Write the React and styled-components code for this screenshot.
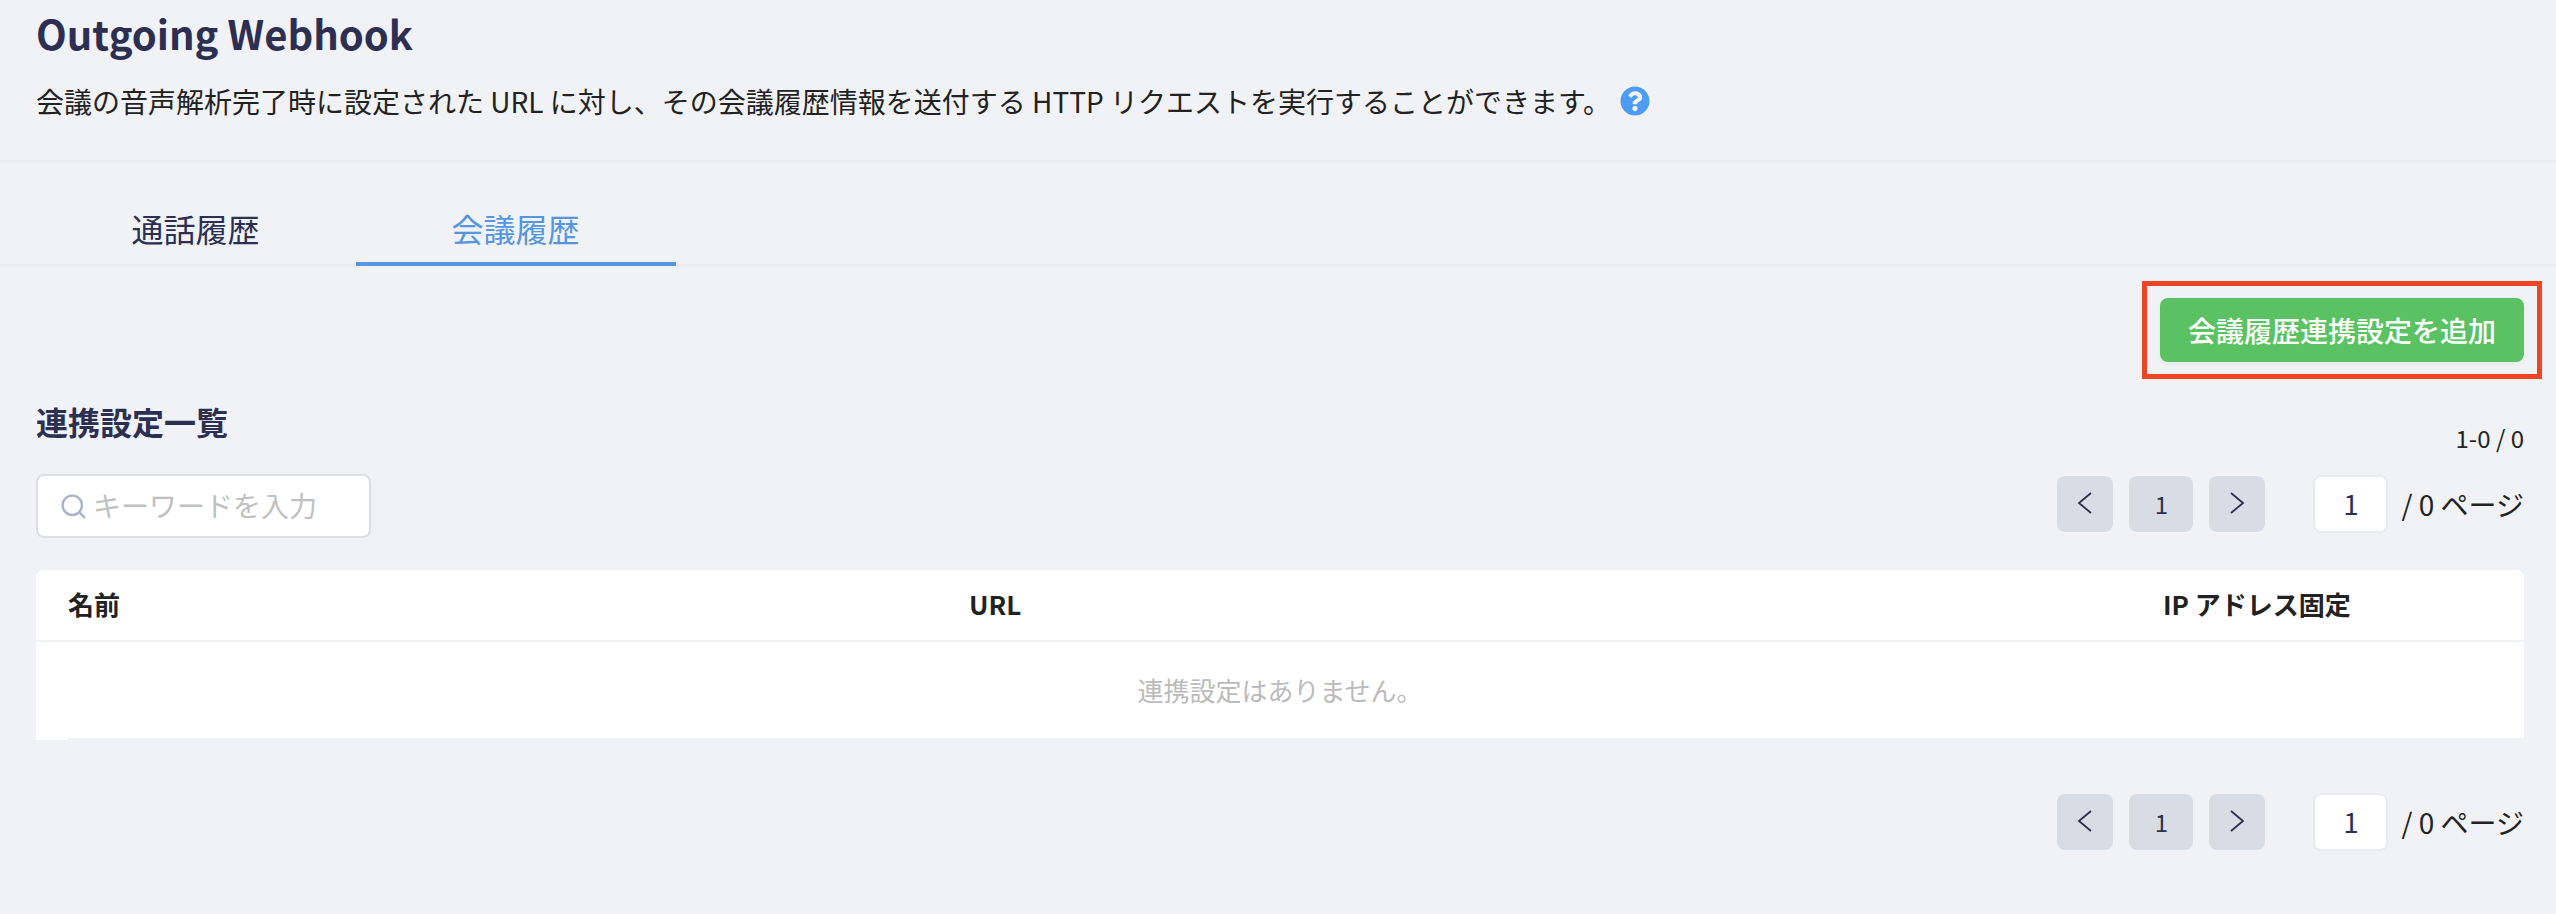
import React from 'react'
import styled, { createGlobalStyle } from 'styled-components'
import { FaQuestionCircle } from 'react-icons/fa'
import { Search } from 'lucide-react'

const GlobalStyle = createGlobalStyle`
  html, body {
    margin: 0;
    background: #f0f2f6;
  }
  body {
    font-family: "Noto Sans CJK JP", "Noto Sans", sans-serif;
    color: #222;
    overflow: hidden;
  }
  * {
    box-sizing: border-box;
  }
`

const Page = styled.div`
  width: 2556px;
  height: 914px;
  background: #f0f2f6;
`

const Header = styled.header`
  height: 162px;
  padding: 12px 36px 0;
  border-bottom: 2px solid #e8eaee;
`

const Title = styled.h1`
  margin: 0;
  font-size: 40px;
  line-height: 42px;
  font-weight: 700;
  color: #2d2f52;
`

const Description = styled.p`
  display: flex;
  align-items: center;
  margin: 27px 0 0;
  font-size: 28px;
  line-height: 40px;
`

const HelpIcon = styled(FaQuestionCircle)`
  width: 30px;
  height: 30px;
  margin-left: 9px;
  color: #4c9cf4;
`

const Tabs = styled.nav`
  display: flex;
  height: 104px;
  padding-left: 36px;
  border-bottom: 2px solid #e8eaee;
`

const Tab = styled.div`
  width: 320px;
  height: 104px;
  padding: 46px 1px 0 0;
  text-align: center;
  font-size: 32px;
  line-height: 40px;
  color: ${(props) => (props.active ? '#5597df' : '#2d2f52')};
  border-bottom: 4px solid ${(props) => (props.active ? '#5597df' : 'transparent')};
`

const Content = styled.main`
  padding: 32px 32px 0 36px;
`

const Actions = styled.div`
  display: flex;
  justify-content: flex-end;
`

const AddButton = styled.button`
  position: relative;
  width: 364px;
  height: 64px;
  padding: 0;
  border: none;
  border-radius: 8px;
  background: #5bc264;
  color: #fff;
  font-family: inherit;
  font-size: 28px;
  font-weight: 500;
  box-shadow: 0 2px 4px rgba(0, 0, 0, 0.05);

  &::after {
    content: '';
    position: absolute;
    inset: -17px -18px;
    border: 5px solid #ee4422;
  }
`

const SectionRow = styled.div`
  display: flex;
  justify-content: space-between;
  height: 112px;
`

const SectionTitle = styled.h2`
  margin: 0;
  padding-top: 41px;
  font-size: 32px;
  line-height: 36px;
  font-weight: 700;
  color: #2d2f52;
`

const Count = styled.div`
  padding-top: 62px;
  font-size: 24px;
  line-height: 28px;
`

const Controls = styled.div`
  display: flex;
  justify-content: space-between;
  align-items: flex-start;
  height: 64px;
`

const SearchBox = styled.div`
  display: flex;
  align-items: center;
  width: 335px;
  height: 64px;
  padding-left: 21px;
  background: #fff;
  border: 2px solid #dcdee2;
  border-radius: 8px;
`

const SearchIcon = styled(Search)`
  width: 29px;
  height: 29px;
  color: #a9b4c4;
`

const Placeholder = styled.span`
  margin-left: 5px;
  padding-bottom: 2px;
  font-size: 28px;
  color: #c0c0c0;
`

const Pager = styled.div`
  display: flex;
  align-items: center;
  gap: 16px;
  height: 58px;
`

const PagerButton = styled.div`
  display: flex;
  align-items: center;
  justify-content: center;
  width: ${(props) => (props.wide ? '64px' : '56px')};
  height: 56px;
  padding-bottom: 2px;
  border-radius: 8px;
  background: #d8dde5;
  color: #2d2f52;
  font-size: 24px;
`

const PageInput = styled.div`
  display: flex;
  align-items: center;
  justify-content: center;
  width: 75px;
  height: 58px;
  margin-left: 32px;
  padding-bottom: 2px;
  background: #fff;
  border: 2px solid #e9ebef;
  border-radius: 8px;
  color: #2d2f52;
  font-size: 28px;
`

const PageLabel = styled.span`
  font-size: 28px;
  margin-left: -3px;
`

const PagerTop = styled.div`
  margin-top: 1px;
`

const PagerBottom = styled.div`
  display: flex;
  justify-content: flex-end;
  margin-top: 53px;
`

const Table = styled.div`
  margin-top: 32px;
`

const TableHead = styled.div`
  display: grid;
  grid-template-columns: 901px 1194px 1fr;
  align-items: center;
  height: 72px;
  padding: 0 0 3px 32px;
  background: #fff;
  border-bottom: 2px solid #f0f1f3;
  border-radius: 8px 8px 0 0;
  font-size: 26px;
  font-weight: 700;
  color: #222;
`

const EmptyRow = styled.div`
  height: 96px;
  padding-top: 2px;
  background: #fff;
  text-align: center;
  font-size: 26px;
  line-height: 92px;
  color: #bbb;
`

const TableTail = styled.div`
  width: 32px;
  height: 2px;
  background: #fff;
`

const Chevron = ({ flip }) => (
  <svg width="16" height="24" viewBox="0 0 16 24" fill="none" stroke="#2d2f52" strokeWidth="1.8">
    <path d={flip ? 'M2 2l12 10L2 22' : 'M14 2L2 12l12 10'} />
  </svg>
)

const Pagination = () => (
  <Pager>
    <PagerButton><Chevron /></PagerButton>
    <PagerButton wide>1</PagerButton>
    <PagerButton><Chevron flip /></PagerButton>
    <PageInput>1</PageInput>
    <PageLabel>/ 0 ページ</PageLabel>
  </Pager>
)

const App = () => (
  <Page>
    <GlobalStyle />
    <Header>
      <Title>Outgoing Webhook</Title>
      <Description>
        会議の音声解析完了時に設定された URL に対し、その会議履歴情報を送付する HTTP リクエストを実行することができます。
        <HelpIcon />
      </Description>
    </Header>
    <Tabs>
      <Tab>通話履歴</Tab>
      <Tab active>会議履歴</Tab>
    </Tabs>
    <Content>
      <Actions>
        <AddButton>会議履歴連携設定を追加</AddButton>
      </Actions>
      <SectionRow>
        <SectionTitle>連携設定一覧</SectionTitle>
        <Count>1-0 / 0</Count>
      </SectionRow>
      <Controls>
        <SearchBox>
          <SearchIcon strokeWidth={2} />
          <Placeholder>キーワードを入力</Placeholder>
        </SearchBox>
        <PagerTop>
          <Pagination />
        </PagerTop>
      </Controls>
      <Table>
        <TableHead>
          <span>名前</span>
          <span>URL</span>
          <span>IP アドレス固定</span>
        </TableHead>
        <EmptyRow>連携設定はありません。</EmptyRow>
        <TableTail />
      </Table>
      <PagerBottom>
        <Pagination />
      </PagerBottom>
    </Content>
  </Page>
)

export default App
